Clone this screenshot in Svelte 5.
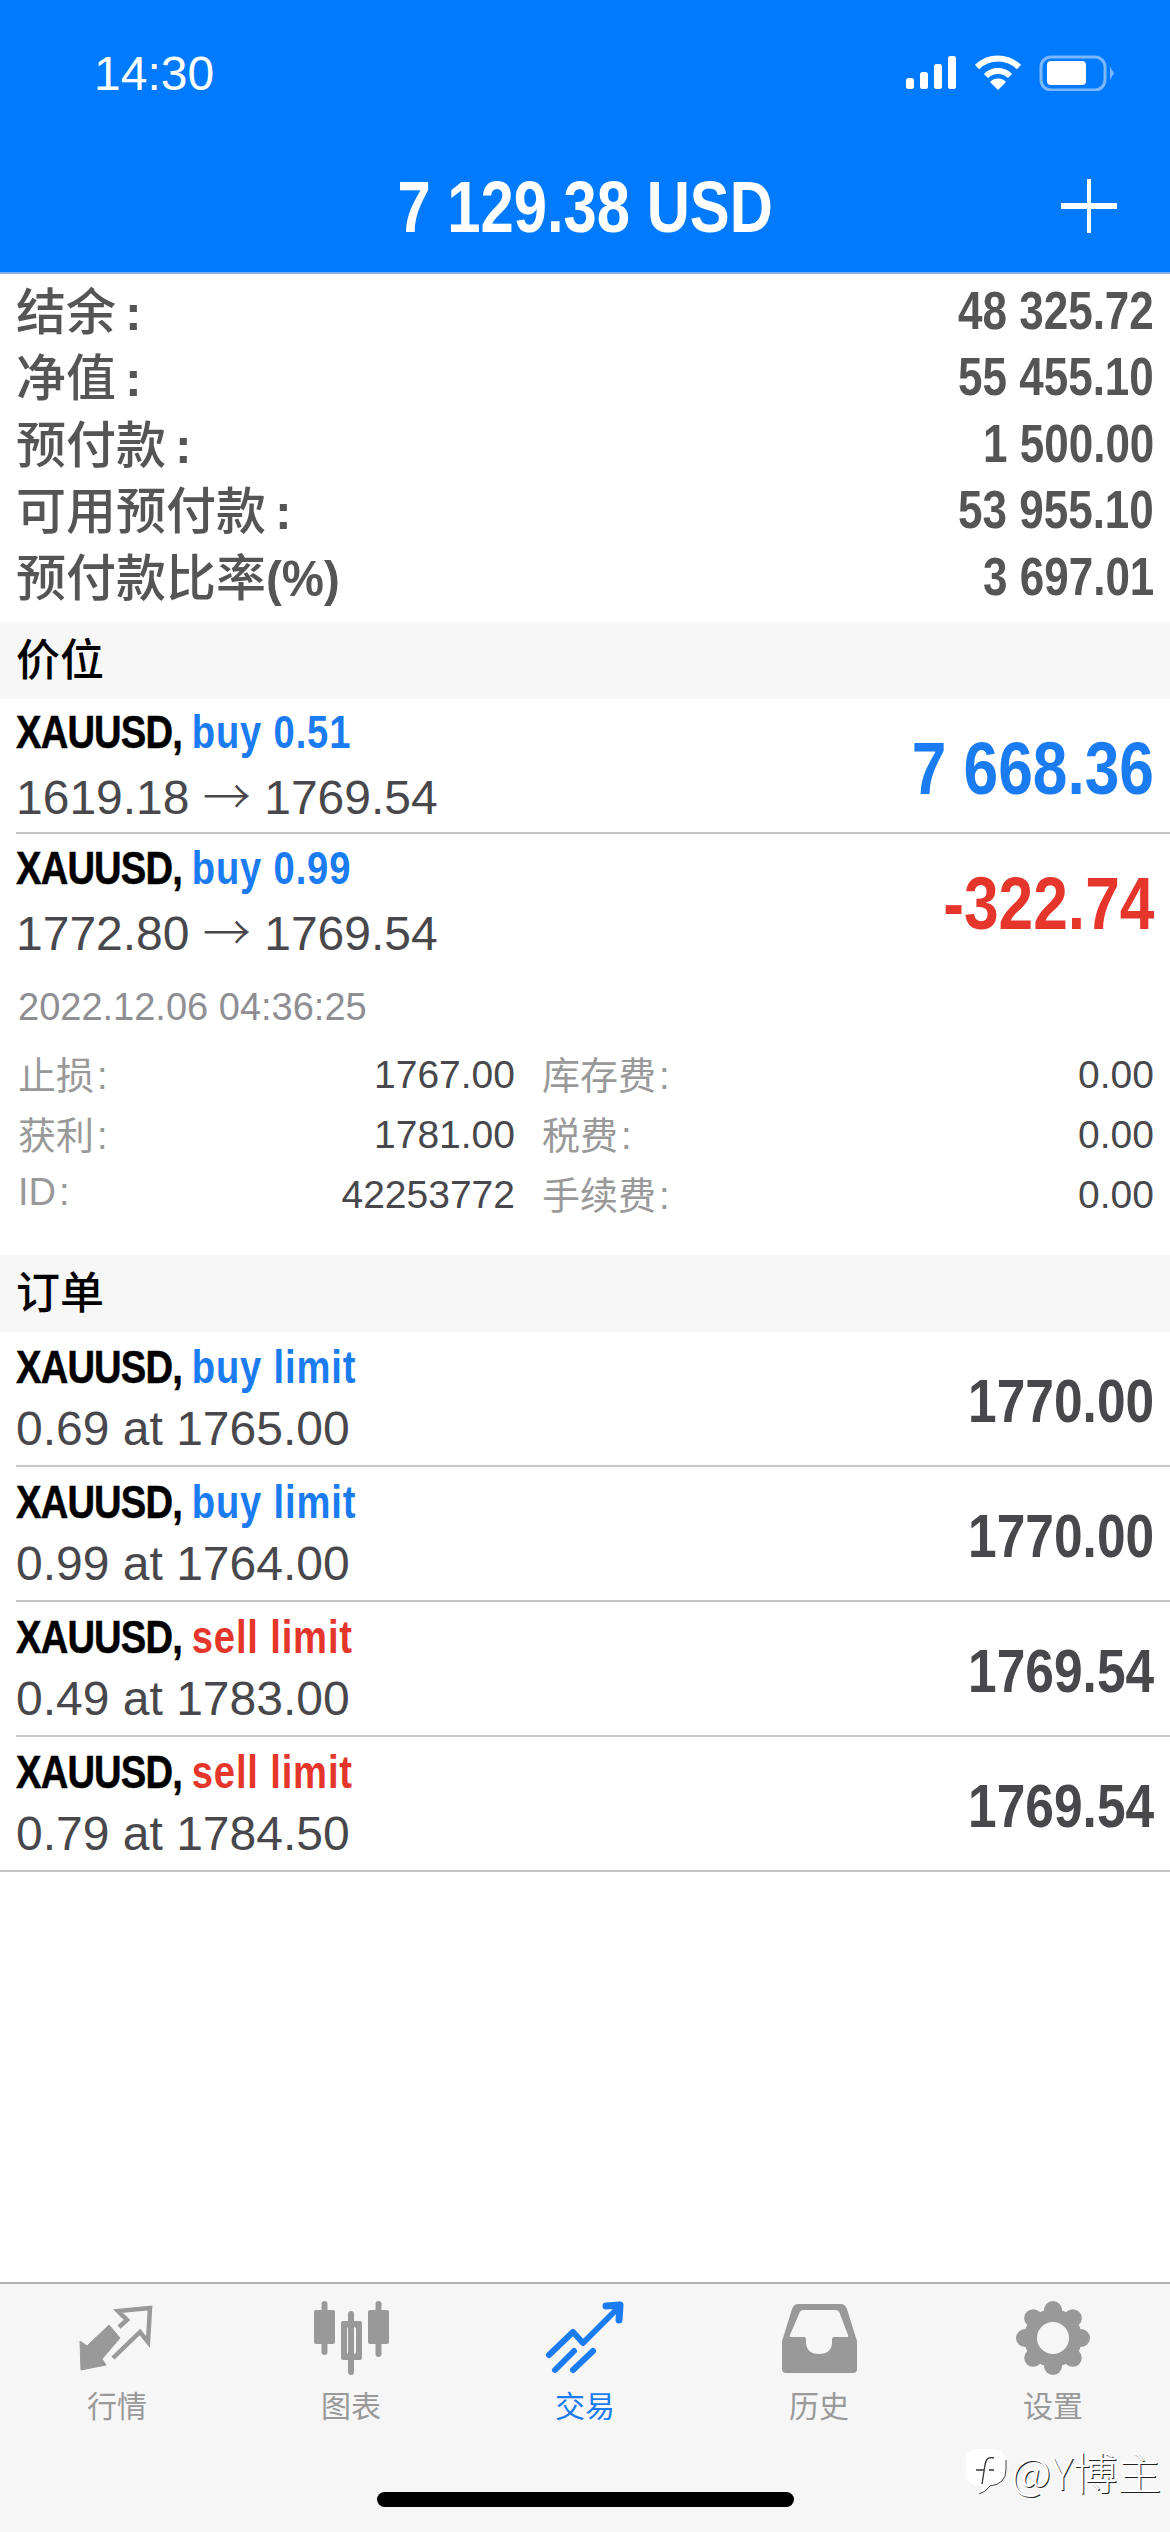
<script>
    let summary = [
        ["结余", "48 325.72", true],
        ["净值", "55 455.10", true],
        ["预付款", "1 500.00", true],
        ["可用预付款", "53 955.10", true],
        ["预付款比率", "3 697.01", false]
    ]
    let orders = [
        { side: "buy limit", cls: "blue", sub: "0.69 at 1765.00", price: "1770.00" },
        { side: "buy limit", cls: "blue", sub: "0.99 at 1764.00", price: "1770.00" },
        { side: "sell limit", cls: "red", sub: "0.49 at 1783.00", price: "1769.54" },
        { side: "sell limit", cls: "red", sub: "0.79 at 1784.50", price: "1769.54" }
    ]
    let details = [
        ["止损", "1767.00", "库存费", "0.00"],
        ["获利", "1781.00", "税费", "0.00"],
        ["ID", "42253772", "手续费", "0.00"]
    ]
    let teeth = [0, 45, 90, 135, 180, 225, 270, 315]
</script>

<div class="page">
    <header>
        <div class="status">
            <span class="time">14:30</span>
            <div class="status-icons">
                <svg width="52" height="36" viewBox="0 0 52 36" fill="#fff">
                    <rect x="1" y="23" width="8" height="11" rx="2.5"/>
                    <rect x="15" y="17" width="8" height="17" rx="2.5"/>
                    <rect x="29" y="9" width="8" height="25" rx="2.5"/>
                    <rect x="43" y="1" width="8" height="33" rx="2.5"/>
                </svg>
                <svg width="50" height="36" viewBox="0 0 50 36">
                    <g fill="none" stroke="#fff" stroke-width="6">
                        <path d="M4 12A30 30 0 0 1 46 12"/>
                        <path d="M13 21A17 17 0 0 1 37 21"/>
                    </g>
                    <path d="M25 35L17 27A11 11 0 0 1 33 27Z" fill="#fff"/>
                </svg>
                <svg width="76" height="36" viewBox="0 0 76 36">
                    <rect x="2" y="2" width="64" height="33" rx="10" fill="none" stroke="#7db8ff" stroke-width="3"/>
                    <rect x="8" y="6" width="39" height="24" rx="4" fill="#fff"/>
                    <path d="M71 12L75 18L71 25Z" fill="#7db8ff"/>
                </svg>
            </div>
        </div>
        <div class="title-bar">
            <span class="title">7 129.38 USD</span>
            <svg class="plus" width="56" height="54" viewBox="0 0 56 54" fill="#fff">
                <rect x="26" y="0" width="4" height="54"/>
                <rect x="0" y="24" width="56" height="6"/>
            </svg>
        </div>
    </header>

    <main>
        <section class="summary">
            {#each summary as row}
                <div class="summary-row">
                    <span class="summary-label">{row[0]}{#if row[2]}<span class="colon">:</span>{:else}<span class="pct">(%)</span>{/if}</span>
                    <span class="summary-value">{row[1]}</span>
                </div>
            {/each}
        </section>

        <div class="section-head"><span>价位</span></div>

        <div class="row">
            <div>
                <div class="name">XAUUSD, <span class="blue">buy 0.51</span></div>
                <div class="sub">1619.18 <span class="arrow">→</span> 1769.54</div>
            </div>
            <span class="profit blue">7 668.36</span>
        </div>
        <div class="row open">
            <div>
                <div class="name">XAUUSD, <span class="blue">buy 0.99</span></div>
                <div class="sub">1772.80 <span class="arrow">→</span> 1769.54</div>
            </div>
            <span class="profit red">-322.74</span>
        </div>
        <div class="date">2022.12.06 04:36:25</div>
        <div class="details">
            {#each details as d}
                <div class="detail"><span class="detail-label">{d[0]}<span class="colon">:</span></span><span>{d[1]}</span></div>
                <div class="detail"><span class="detail-label">{d[2]}<span class="colon">:</span></span><span>{d[3]}</span></div>
            {/each}
        </div>

        <div class="section-head"><span>订单</span></div>

        {#each orders as order, i}
            <div class="row" class:last={i == orders.length - 1}>
                <div>
                    <div class="name">XAUUSD, <span class={order.cls}>{order.side}</span></div>
                    <div class="sub">{order.sub}</div>
                </div>
                <span class="price">{order.price}</span>
            </div>
        {/each}
    </main>

    <footer>
        <nav>
            <div class="tab">
                <svg width="95" height="85" viewBox="0 0 95 85">
                    <path d="M49 33L57 26L48 17L80 14L78 48L70 38L43 64" fill="none" stroke="#999" stroke-width="4.5"/>
                    <path d="M39 31L50 44L32 65L36 71L11 76L10 47L17 52Z" fill="#999" stroke="#999" stroke-width="1" stroke-linejoin="round"/>
                </svg>
                <span>行情</span>
            </div>
            <div class="tab">
                <svg width="90" height="85" viewBox="0 0 90 85" fill="#999">
                    <rect x="15.5" y="7" width="6" height="54" rx="3"/>
                    <rect x="8" y="16" width="21" height="34" rx="2"/>
                    <rect x="42" y="17" width="6" height="64" rx="3"/>
                    <path fill-rule="evenodd" d="M37 27H54Q56 27 56 29V64Q56 66 54 66H37Q35 66 35 64V29Q35 27 37 27ZM43 33Q41 33 41 35V58Q41 60 43 60H48Q50 60 50 58V35Q50 33 48 33Z"/>
                    <rect x="69.5" y="7" width="6" height="56" rx="3"/>
                    <rect x="62" y="16" width="21" height="34" rx="2"/>
                </svg>
                <span>图表</span>
            </div>
            <div class="tab active">
                <svg width="90" height="85" viewBox="0 0 90 85" fill="none" stroke="#1a7cf0" stroke-width="6" stroke-linecap="round" stroke-linejoin="round">
                    <path d="M9 61L33 38L43 49L77 15"/>
                    <path d="M66 12L80 11L79 26" stroke-width="7"/>
                    <path d="M15 76L34 57"/>
                    <path d="M33 76L53 57"/>
                </svg>
                <span>交易</span>
            </div>
            <div class="tab">
                <svg width="90" height="85" viewBox="0 0 90 85" fill="#999">
                    <path fill-rule="evenodd" d="M24 10H67Q71 10 73 15L82 44Q83 46 83 48V75Q83 79 79 79H12Q8 79 8 75V48Q8 46 9 44L18 15Q20 10 24 10ZM30 16Q26 16 25 20L16 41Q15 43 17 43H30Q32 43 32 46V49Q33 60 45 60Q57 60 58 49V46Q58 43 60 43H73Q75 43 74 41L66 20Q65 16 61 16Z"/>
                </svg>
                <span>历史</span>
            </div>
            <div class="tab">
                <svg width="90" height="85" viewBox="0 0 90 85" fill="#999">
                    <circle cx="45" cy="44" r="29"/>
                    {#each teeth as a}
                        <circle cx="45" cy="16" r="9" transform="rotate({a} 45 44)"/>
                    {/each}
                    <circle cx="45" cy="44" r="16" fill="#f6f6f6"/>
                </svg>
                <span>设置</span>
            </div>
        </nav>
        <div class="home-bar"></div>
        <div class="watermark">
            <svg width="46" height="50" viewBox="0 0 46 50">
                <path d="M16 3H30Q44 3 44 18V24Q44 38 28 40Q24 46 17 48Q21 43 19 40Q4 40 4 26V14Q4 3 16 3Z" fill="#fff"/>
                <path d="M44 14V24Q44 38 28 40Q24 46 17 48" fill="none" stroke="#444" stroke-width="1"/>
                <path d="M32 12Q24 10 23 19L20 38M14 24H22M27 24H32" fill="none" stroke="#333" stroke-width="1.3"/>
            </svg>
            <span>@Y博主</span>
        </div>
    </footer>
</div>

<style>
    :global(body) {
        margin: 0;
        background: #fff;
    }
    .page {
        width: 1170px;
        height: 2532px;
        display: flex;
        flex-direction: column;
        font-family: "Liberation Sans", "Noto Sans CJK SC", sans-serif;
        color: #444;
        overflow: hidden;
    }
    header {
        height: 272px;
        flex: none;
        background: #007aff;
        border-bottom: 2px solid #7fb0e8;
        color: #fff;
        box-sizing: content-box;
    }
    .status {
        height: 148px;
        padding: 55px 55px 0 94px;
        box-sizing: border-box;
        display: flex;
        justify-content: space-between;
        align-items: flex-start;
    }
    .time {
        font-size: 48px;
        line-height: 38px;
    }
    .status-icons {
        display: flex;
        gap: 16px;
        align-items: flex-start;
    }
    .title-bar {
        display: flex;
        justify-content: center;
        position: relative;
        height: 124px;
    }
    /* the bold numbers are a condensed face, no narrow font is installed */
    .title,
    .summary-value,
    .name,
    .profit,
    .price {
        font-weight: 700;
        display: inline-block;
        white-space: nowrap;
    }
    .title {
        font-size: 72px;
        line-height: 119px;
        transform: scaleX(0.83);
    }
    .plus {
        position: absolute;
        right: 53px;
        top: 31px;
    }
    main {
        flex: 1;
    }
    .summary {
        padding: 3px 16px 12px;
    }
    .summary-row {
        height: 66.5px;
        display: flex;
        justify-content: space-between;
        align-items: center;
        color: #555;
    }
    .summary-label {
        font-size: 50px;
        font-weight: 500;
        margin-top: -5px;
    }
    .summary-label .colon {
        font-weight: 700;
        margin-left: 9px;
    }
    .pct {
        font-weight: 700;
        display: inline-block;
        transform: scaleX(0.95);
        transform-origin: left center;
    }
    .summary-value {
        font-size: 53px;
        transform: scaleX(0.83);
        transform-origin: right center;
    }
    .section-head {
        height: 77px;
        background: #f7f7f7;
        padding-left: 16px;
        display: flex;
        align-items: center;
        font-family: "Noto Sans CJK SC", sans-serif;
        font-size: 44px;
        font-weight: 500;
        color: #000;
    }
    .section-head span {
        margin-top: -6px;
    }
    .row {
        height: 135px;
        box-sizing: border-box;
        margin-left: 16px;
        padding-right: 16px;
        border-bottom: 2px solid #c8c8c8;
        display: flex;
        justify-content: space-between;
        align-items: center;
    }
    .row.open {
        border-bottom: none;
        height: 134px;
    }
    .row.last {
        margin-left: 0;
        padding-left: 16px;
    }
    .name {
        font-size: 46px;
        line-height: 50px;
        color: #000;
        letter-spacing: -1px;
        -webkit-text-stroke: 0.5px #000;
        transform: scaleX(0.83);
        transform-origin: left center;
    }
    .name span {
        letter-spacing: 1px;
        -webkit-text-stroke: 0;
    }
    .sub {
        font-size: 48px;
        line-height: 50px;
        margin-top: 12px;
        color: #48484c;
    }
    .arrow {
        font-family: "Noto Sans CJK SC", sans-serif;
        font-weight: 300;
        line-height: 1;
    }
    .blue {
        color: #1a7cf0;
    }
    .red {
        color: #e6352b;
    }
    .profit {
        font-size: 75px;
        transform: scaleX(0.83);
        transform-origin: right center;
        margin-top: 5px;
    }
    .price {
        font-size: 62px;
        color: #48484c;
        transform: scaleX(0.83);
        transform-origin: right center;
        margin-top: 5px;
    }
    .date {
        font-size: 38px;
        line-height: 40px;
        color: #8e8e93;
        padding: 19px 0 0 18px;
    }
    .details {
        display: grid;
        grid-template-columns: 497px 1fr;
        column-gap: 27px;
        padding: 18px 16px 30px 18px;
    }
    .detail {
        height: 60px;
        display: flex;
        justify-content: space-between;
        align-items: center;
        font-size: 39px;
        color: #48484c;
    }
    .detail-label {
        color: #999;
        font-size: 38px;
        margin-top: -5px;
    }
    .detail-label .colon {
        margin-left: 3px;
    }
    footer {
        height: 250px;
        flex: none;
        box-sizing: border-box;
        background: #f6f6f6;
        border-top: 2px solid #b4b4b4;
        position: relative;
    }
    nav {
        display: grid;
        grid-template-columns: repeat(5, 1fr);
        padding-top: 10px;
    }
    .tab {
        display: flex;
        flex-direction: column;
        align-items: center;
        font-family: "Noto Sans CJK SC", sans-serif;
        font-size: 30px;
        line-height: 36px;
        color: #999;
    }
    .tab span {
        margin-top: 7px;
    }
    .tab.active {
        color: #1a7cf0;
    }
    .home-bar {
        width: 417px;
        height: 15px;
        border-radius: 8px;
        background: #000;
        margin: 70px auto 0;
    }
    .watermark {
        position: absolute;
        left: 962px;
        top: 155px;
        display: flex;
        align-items: center;
        gap: 3px;
        font-family: "Noto Sans CJK SC", sans-serif;
        font-size: 44px;
        font-weight: 300;
        color: #fff;
        text-shadow: 1px 1px 0 #222;
    }
</style>
